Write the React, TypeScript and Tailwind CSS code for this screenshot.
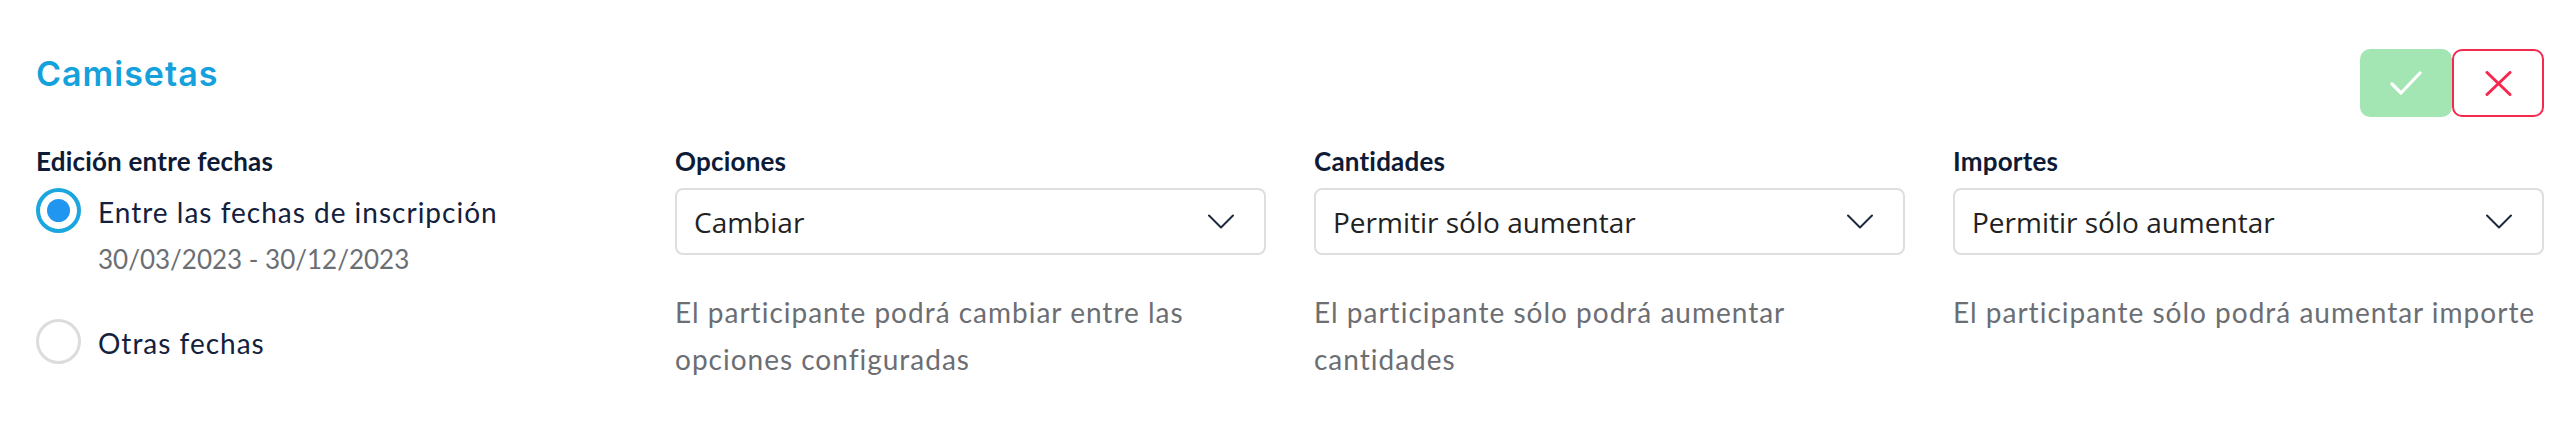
import React from "react";

function Chevron() {
  return (
    <svg width="26" height="15" viewBox="0 0 26 15" fill="none">
      <polyline points="1,1.5 13,13.5 25,1.5" stroke="#1c2940" strokeWidth="2" strokeLinecap="round" strokeLinejoin="round" />
    </svg>
  );
}

function SelectBox({ value }: { value: string }) {
  return (
    <div className="mt-[11px] h-[67px] border-2 border-[#dedede] rounded-[8px] pl-[17px] pr-[30px] flex items-center justify-between bg-white">
      <span className="text-[28px] leading-[40px] text-[#222222] font-['Open_Sans',sans-serif]">{value}</span>
      <Chevron />
    </div>
  );
}

function Column({ label, value, help }: { label: string; value: string; help: string }) {
  return (
    <div className="flex flex-col min-w-0">
      <div className="text-[26px] leading-[32px] font-bold tracking-[0.2px] text-[#0d1b36]">{label}</div>
      <SelectBox value={value} />
      <p className="mt-[34px] text-[28px] leading-[47px] tracking-[1px] text-[#6b6e73]">{help}</p>
    </div>
  );
}

export default function App() {
  return (
    <div className="w-full min-h-[423px] bg-white pl-[36px] pr-[16px] pt-[49px] font-['Lato',sans-serif]">
      <div className="flex justify-between items-start h-[69px]">
        <h2 className="mt-[5px] text-[34px] leading-[40px] font-semibold tracking-[0.03em] text-[#14a1dc] font-['Inter',sans-serif]">
          Camisetas
        </h2>
        <div className="flex">
          <button className="w-[92px] h-[68px] rounded-[10px] bg-[#a3e6b4] flex items-center justify-center">
            <svg width="32" height="24" viewBox="0 0 32 24" fill="none">
              <polyline points="2,13 11,22 30,2" stroke="white" strokeWidth="3.2" strokeLinecap="round" strokeLinejoin="round" />
            </svg>
          </button>
          <button className="w-[92px] h-[68px] rounded-[10px] border-2 border-[#f5284e] bg-white flex items-center justify-center">
            <svg width="27" height="25" viewBox="0 0 27 25" fill="none">
              <line x1="2" y1="1.5" x2="25" y2="23.5" stroke="#f5284e" strokeWidth="3" strokeLinecap="round" />
              <line x1="25" y1="1.5" x2="2" y2="23.5" stroke="#f5284e" strokeWidth="3" strokeLinecap="round" />
            </svg>
          </button>
        </div>
      </div>

      <div className="mt-[27px] grid grid-cols-4 gap-x-[48px]">
        <div className="flex flex-col">
          <div className="text-[26px] leading-[32px] font-bold tracking-[0.2px] text-[#0d1b36]">Edición entre fechas</div>
          <div className="mt-[11px] flex flex-col gap-[38px]">
            <div className="flex items-start gap-[17px]">
              <span className="w-[45px] h-[45px] rounded-full border-[4px] border-[#1ba6e0] flex items-center justify-center shrink-0">
                <span className="w-[23px] h-[23px] rounded-full bg-[#2196f0]" />
              </span>
              <div className="flex flex-col">
                <span className="text-[28px] leading-[48px] tracking-[1px] text-[#14213d]">Entre las fechas de inscripción</span>
                <span className="mt-[1px] text-[26px] leading-[44px] text-[#6b6e73]">30/03/2023 - 30/12/2023</span>
              </div>
            </div>
            <div className="flex items-start gap-[17px]">
              <span className="w-[45px] h-[45px] rounded-full border-[3px] border-[#dcdcdc] shrink-0" />
              <span className="text-[28px] leading-[48px] tracking-[1px] text-[#14213d]">Otras fechas</span>
            </div>
          </div>
        </div>
        <Column label="Opciones" value="Cambiar" help="El participante podrá cambiar entre las opciones configuradas" />
        <Column label="Cantidades" value="Permitir sólo aumentar" help="El participante sólo podrá aumentar cantidades" />
        <Column label="Importes" value="Permitir sólo aumentar" help="El participante sólo podrá aumentar importe" />
      </div>
    </div>
  );
}
